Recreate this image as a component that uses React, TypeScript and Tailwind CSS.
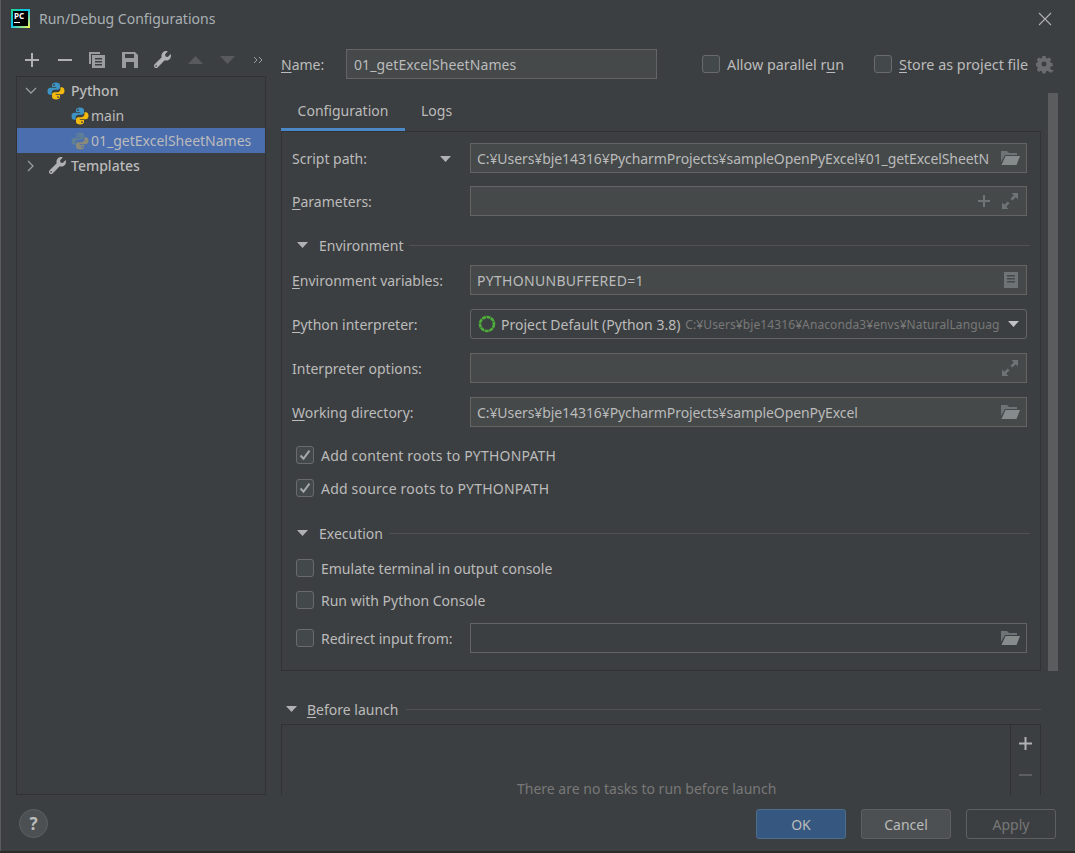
import React from 'react';
import { FaWrench } from 'react-icons/fa';

const label = 'translate-y-px text-[14px] leading-5 text-[#bbbbbb]';

function PythonIcon({ muted = false }: { muted?: boolean }) {
  const blue = muted ? '#5f7f96' : '#3d94c4';
  const yellow = muted ? '#8a8a7a' : '#f2b90f';
  return (
    <svg width="18" height="18" viewBox="0 0 18 18" className="shrink-0">
      <path fill={blue} d="M9 0.5C6.4 0.5 5 1.5 5 3.2V5h4.2v.8H3.2C1.5 5.8.5 7.1.5 9.2s1 3.6 2.6 3.6H4.6v-2.1c0-1.7 1.3-2.9 3-2.9h3.2c1.2 0 2.2-1 2.2-2.2V3.2C13 1.5 11.4.5 9 .5zM7 2a.9.9 0 1 1 0 1.8A.9.9 0 0 1 7 2z" />
      <path fill={yellow} d="M9 17.5c2.6 0 4-1 4-2.7V13H8.8v-.8h6c1.7 0 2.7-1.3 2.7-3.4s-1-3.6-2.6-3.6h-1.5v2.1c0 1.7-1.3 2.9-3 2.9H7.2c-1.2 0-2.2 1-2.2 2.2v2.4c0 1.7 1.6 2.7 4 2.7zM11 16a.9.9 0 1 1 0-1.8.9.9 0 0 1 0 1.8z" />
    </svg>
  );
}

function FolderIcon() {
  return (
    <svg width="20" height="16" viewBox="0 0 20 16" className="shrink-0">
      <path fill="#6e7476" d="M1 1h6l2 2h8v2H5L1 12z" />
      <path fill="#868b8c" d="M5.5 6H20l-3.5 9H1.5z" />
    </svg>
  );
}

function ExpandIcon() {
  return (
    <svg width="16" height="16" viewBox="0 0 16 16" className="mr-[2px] shrink-0">
      <path fill="#6e7375" d="M9.5 0H16v6.5l-2.3-2.3-3.4 3.4-1.9-1.9 3.4-3.4zM6.5 16H0V9.5l2.3 2.3 3.4-3.4 1.9 1.9-3.4 3.4z" />
    </svg>
  );
}

function Triangle({ color = '#afb1b3' }: { color?: string }) {
  return (
    <svg width="11" height="6" viewBox="0 0 11 6" className="shrink-0">
      <path fill={color} d="M0 0h11L5.5 6z" />
    </svg>
  );
}

function Checkbox({ checked = false }: { checked?: boolean }) {
  return (
    <span className="flex h-[18px] w-[18px] shrink-0 items-center justify-center rounded-[3px] border border-[#6b6b6b] bg-[#43494a]">
      {checked && (
        <svg width="14" height="14" viewBox="0 0 14 14">
          <path fill="none" stroke="#a7a7a7" strokeWidth="2" d="M2.5 7.5l3 3.2 6-8" />
        </svg>
      )}
    </span>
  );
}

function CheckRow({ text, checked, className, textClass = '' }: { text: string; checked?: boolean; className: string; textClass?: string }) {
  return (
    <div className={`ml-[14px] flex items-center gap-[7px] ${className}`}>
      <Checkbox checked={checked} />
      <span className={`${label} ${textClass}`}>{text}</span>
    </div>
  );
}

function Section({ title, className }: { title: string; className: string }) {
  return (
    <div className={`ml-[15px] mr-[10px] flex h-5 items-center ${className}`}>
      <Triangle />
      <span className={`ml-[11px] ${label}`}>{title}</span>
      <div className="ml-1.5 h-px flex-1 bg-[#515151]" />
    </div>
  );
}

function Field({ text, icon, className, label: name, textClass = 'tracking-[-0.08px]' }: { text?: string; icon?: React.ReactNode; className: string; label: React.ReactNode; textClass?: string }) {
  return (
    <div className={`ml-[10px] flex items-center ${className}`}>
      <div className={`w-[178px] shrink-0 ${label}`}>{name}</div>
      <div className="flex h-[30px] w-[557px] items-center border border-[#646464] bg-[#45494a] pl-[6px] pr-[6px]">
        <span className={`min-w-0 flex-1 overflow-hidden whitespace-nowrap ${textClass} ${label}`}>{text}</span>
        {icon}
      </div>
    </div>
  );
}

function Btn({ text, className }: { text: string; className: string }) {
  return (
    <div className={`flex h-[30px] w-[90px] items-center justify-center rounded-[3px] border text-[14px] ${className}`}>
      {text}
    </div>
  );
}

export default function App() {
  return (
    <div className="flex h-[853px] w-[1075px] flex-col overflow-hidden border-b-2 border-b-[#2b2b2b] bg-[#3c3f41] font-['Open_Sans','Noto_Sans',sans-serif] shadow-[inset_1px_0_0_#5c5c5c]">
      <div className="flex h-[37px] shrink-0 items-center pl-[11px] pr-[23px]">
        <div className="flex h-[19px] w-[19px] flex-col bg-[linear-gradient(135deg,#21d789,#07c3f2_45%,#fcf84a)] p-[2px]">
          <div className="flex flex-1 flex-col bg-black px-px text-[8px] font-bold leading-[9px] text-white">
            PC
            <div className="mt-[2px] h-px w-[6px] bg-white" />
          </div>
        </div>
        <span className="ml-[9px] text-[14px] text-[#a9b0b6]">Run/Debug Configurations</span>
        <svg width="14" height="14" viewBox="0 0 14 14" className="ml-auto">
          <path stroke="#afb1b3" strokeWidth="1.1" d="M1 1l12 12M13 1L1 13" />
        </svg>
      </div>

      <div className="flex h-[758px] shrink-0">
        <div className="flex w-[266px] shrink-0 flex-col pl-4">
          <div className="flex h-[39px] shrink-0 items-center pl-[9px] pt-[6px] text-[#afb1b3]">
            <svg width="14" height="14" viewBox="0 0 14 14"><path fill="#afb1b3" d="M6 0h2v6h6v2H8v6H6V8H0V6h6z" /></svg>
            <svg width="14" height="14" viewBox="0 0 14 14" className="ml-[19px]"><path fill="#afb1b3" d="M0 6h14v2H0z" /></svg>
            <svg width="16" height="16" viewBox="0 0 16 16" className="ml-[17px]"><path fill="#9a9c9e" d="M0 0h11v2H2v10H0z" /><path fill="#9a9c9e" fillRule="evenodd" d="M3 3h13v13H3zm3 3v1.5h7V6zm0 3v1.5h7V9zm0 3v1.5h7V12z" /></svg>
            <svg width="16" height="16" viewBox="0 0 16 16" className="ml-[17px]"><path fill="#9a9c9e" fillRule="evenodd" d="M0 0h13l3 3v13H0zm3 2v4h9V2zm1 8v6h8v-6z" /></svg>
            <FaWrench className="ml-[16px] text-[17px] text-[#afb1b3]" />
            <svg width="15" height="8" viewBox="0 0 15 8" className="ml-[17px]"><path fill="#585a5c" d="M7.5 0L15 8H0z" /></svg>
            <svg width="15" height="8" viewBox="0 0 15 8" className="ml-[17px]"><path fill="#585a5c" d="M0 0h15L7.5 8z" /></svg>
            <svg width="10" height="8" viewBox="0 0 10 8" className="ml-[18px]"><path fill="none" stroke="#9a9c9e" d="M1 1l3 3-3 3M6 1l3 3-3 3" /></svg>
          </div>
          <div className="flex h-[719px] flex-col border border-[#323232] pt-[1px] text-[14px] text-[#bbbbbb]">
            <div className="flex h-[25px] items-center pl-[8px]">
              <svg width="12" height="8" viewBox="0 0 12 8"><path fill="none" stroke="#9a9c9e" strokeWidth="1.3" d="M1 1l5 5 5-5" /></svg>
              <span className="ml-[10px]"><PythonIcon /></span>
              <span className="ml-[6px] font-medium">Python</span>
            </div>
            <div className="flex h-[25px] items-center pl-[54px]">
              <PythonIcon />
              <span className="ml-[2px]">main</span>
            </div>
            <div className="flex h-[25px] items-center bg-[#4b6eaf] pl-[54px]">
              <PythonIcon muted />
              <span className="ml-[2px]">01_getExcelSheetNames</span>
            </div>
            <div className="flex h-[25px] items-center pl-[10px]">
              <svg width="8" height="12" viewBox="0 0 8 12"><path fill="none" stroke="#9a9c9e" strokeWidth="1.3" d="M1 1l5 5-5 5" /></svg>
              <FaWrench className="ml-[14px] text-[17px] text-[#afb1b3]" />
              <span className="ml-[5px] font-medium">Templates</span>
            </div>
          </div>
        </div>

        <div className="ml-[15px] flex min-w-0 flex-1 flex-col">
          <div className="mt-3 flex h-[30px] shrink-0 items-center">
            <span className={`w-[65px] ${label}`}><span className="underline underline-offset-2">N</span>ame:</span>
            <div className="flex h-[30px] w-[311px] items-center border border-[#646464] bg-[#45494a] pl-[7px] text-[14px] tracking-[0.1px] text-[#bbbbbb]"><span className={label}>01_getExcelSheetNames</span></div>
            <div className="ml-[45px]"><Checkbox /></div>
            <span className="ml-[7px] w-[117px] translate-y-px whitespace-nowrap text-[14.35px] leading-5 text-[#bbbbbb]">Allow parallel r<span className="underline underline-offset-2">u</span>n</span>
            <div className="ml-[30px]"><Checkbox /></div>
            <span className="ml-[7px] w-[129px] translate-y-px whitespace-nowrap text-[14.35px] leading-5 text-[#bbbbbb]"><span className="underline underline-offset-2">S</span>tore as project file</span>
            <svg width="18" height="18" viewBox="0 0 18 18" className="ml-2 mt-[2px]">
              <path fill="#6a6c6e" fillRule="evenodd" d="M6.5 0h3l.4 2 1.5.6 1.7-1.1 2.1 2.1-1.1 1.7.6 1.5 2 .4v3l-2 .4-.6 1.5 1.1 1.7-2.1 2.1-1.7-1.1-1.5.6-.4 2h-3l-.4-2-1.5-.6-1.7 1.1L.8 13.8l1.1-1.7-.6-1.5-2-.4v-3l2-.4.6-1.5L.8 3.6l2.1-2.1 1.7 1.1 1.5-.6zM8 5.5a2.5 2.5 0 1 0 0 5 2.5 2.5 0 0 0 0-5z" />
              <path fill="#6a6c6e" d="M12 14h6l-3 3z" />
            </svg>
          </div>

          <div className="mt-[14px] flex min-h-0 flex-1">
            <div className="flex h-[702px] w-[760px] shrink-0 flex-col overflow-hidden">
              <div className="flex h-[38px] shrink-0 text-[14px] text-[#bbbbbb]">
                <div className="flex w-[124px] items-center justify-center border-b-[3px] border-[#4a88c7]">Configuration</div>
                <div className="ml-4 flex items-center pb-[3px]">Logs</div>
              </div>
              <div className="h-[540px] shrink-0 border border-[#323232] pt-[11px]">
                <Field
                  className="h-[30px]"
                  label={
                    <div className="flex w-[159px] items-center justify-between">
                      Script path:
                      <Triangle />
                    </div>
                  }
                  text="C:¥Users¥bje14316¥PycharmProjects¥sampleOpenPyExcel¥01_getExcelSheetN"
                  icon={<span className="ml-2"><FolderIcon /></span>}
                />
                <Field
                  className="mt-[13px] h-[30px]"
                  label={<><span className="underline underline-offset-2">P</span>arameters:</>}
                  icon={
                    <>
                      <svg width="12" height="12" viewBox="0 0 12 12" className="mr-[12px]"><path fill="#6e7375" d="M5 0h2v5h5v2H7v5H5V7H0V5h5z" /></svg>
                      <ExpandIcon />
                    </>
                  }
                />
                <Section title="Environment" className="mt-[19px]" />
                <Field
                  className="mt-[10px] h-[30px]"
                  label={<><span className="underline underline-offset-2">E</span>nvironment variables:</>}
                  text="PYTHONUNBUFFERED=1"
                  textClass="tracking-[0.3px]"
                  icon={
                    <svg width="14" height="16" viewBox="0 0 14 16" className="mr-[2px] shrink-0">
                      <path fill="#6e7375" fillRule="evenodd" d="M0 0h14v16H0zm3 3v1.5h8V3zm0 3v1.5h8V6zm0 3v1.5h8V9z" />
                    </svg>
                  }
                />
                <div className="ml-[10px] mt-[14px] flex h-[30px] items-center">
                  <div className={`w-[178px] shrink-0 ${label}`}><span className="underline underline-offset-2">P</span>ython interpreter:</div>
                  <div className="flex h-[30px] w-[557px] items-center rounded-[3px] border border-[#646464] bg-[#3c3f41] pl-[7px] pr-[7px]">
                    <svg width="18" height="18" viewBox="0 0 18 18" className="shrink-0">
                      <circle cx="9" cy="9" r="7" fill="none" stroke="#4fae3b" strokeWidth="2.6" strokeDasharray="4 0.6" />
                    </svg>
                    <span className={`ml-[5px] whitespace-nowrap ${label}`}>Project Default (Python 3.8)</span>
                    <span className="ml-[5px] min-w-0 flex-1 translate-y-px overflow-hidden whitespace-nowrap text-[12px] tracking-[0.1px] text-[#787878]">C:¥Users¥bje14316¥Anaconda3¥envs¥NaturalLanguage</span>
                    <span className="ml-2"><Triangle color="#c0c2c4" /></span>
                  </div>
                </div>
                <Field className="mt-[14px] h-[30px]" label="Interpreter options:" icon={<ExpandIcon />} />
                <Field
                  className="mt-[14px] h-[30px]"
                  label={<><span className="underline underline-offset-2">W</span>orking directory:</>}
                  text="C:¥Users¥bje14316¥PycharmProjects¥sampleOpenPyExcel"
                  icon={<FolderIcon />}
                />
                <CheckRow className="mt-[18px]" checked textClass="tracking-[0.2px]" text="Add content roots to PYTHONPATH" />
                <CheckRow className="mt-[13px]" checked textClass="tracking-[0.2px]" text="Add source roots to PYTHONPATH" />
                <Section title="Execution" className="mt-[25px]" />
                <CheckRow className="mt-[15px]" text="Emulate terminal in output console" />
                <CheckRow className="mt-[12px]" text="Run with Python Console" />
                <div className="ml-[14px] mt-[13px] flex h-[30px] items-center">
                  <Checkbox />
                  <span className={`ml-[7px] w-[149px] shrink-0 ${label}`}>Redirect input from:</span>
                  <div className="flex h-[30px] w-[557px] items-center justify-end border border-[#646464] bg-[#3c3f41] pr-[6px]">
                    <FolderIcon />
                  </div>
                </div>
              </div>
              <div className="ml-[5px] mt-[28px] flex h-5 shrink-0 items-center">
                <Triangle />
                <span className={`ml-[10px] ${label}`}><span className="underline underline-offset-2">B</span>efore launch</span>
                <div className="ml-2 h-px flex-1 bg-[#515151]" />
              </div>
              <div className="mt-[5px] flex h-[75px] shrink-0 border-x border-t border-[#323232]">
                <div className="relative flex-1">
                  <span className="absolute left-[235px] top-[54px] whitespace-nowrap text-[14px] leading-5 text-[#787878]">There are no tasks to run before launch</span>
                </div>
                <div className="flex w-[30px] flex-col items-center gap-[24px] border-l border-[#323232] pt-[12px]">
                  <svg width="13" height="13" viewBox="0 0 13 13" className="shrink-0"><path fill="#afb1b3" d="M5.5 0h2v5.5H13v2H7.5V13h-2V7.5H0v-2h5.5z" /></svg>
                  <svg width="13" height="2" viewBox="0 0 13 2" className="shrink-0"><path fill="#5c5e60" d="M0 0h13v2H0z" /></svg>
                </div>
              </div>
            </div>
            <div className="ml-[7px] h-[578px] w-[10px] shrink-0 bg-[#5a5c5e]" />
          </div>
        </div>
      </div>

      <div className="flex flex-1 items-start pl-[19px] pr-[19px] pt-[14px]">
        <div className="flex h-[29px] w-[29px] items-center justify-center rounded-full border border-[#5e6060] bg-[#4c5052] text-[17px] font-bold text-[#bbbbbb]">?</div>
        <Btn text="OK" className="ml-auto border-[#4c708c] bg-[#365880] text-[#bbbbbb]" />
        <Btn text="Cancel" className="ml-[15px] border-[#5e6060] bg-[#4c5052] text-[#bbbbbb]" />
        <Btn text="Apply" className="ml-[15px] border-[#5e6060] text-[#777777]" />
      </div>
    </div>
  );
}
